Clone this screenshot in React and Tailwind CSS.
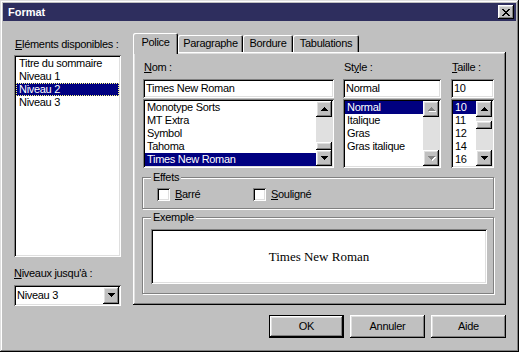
import React from "react";

const raised =
  "bg-[#c0c0c0] shadow-[inset_-1px_-1px_#000,inset_1px_1px_#fff,inset_-2px_-2px_#808080,inset_2px_2px_#dfdfdf]";
const sunken =
  "bg-white shadow-[inset_1px_1px_#808080,inset_-1px_-1px_#fff,inset_2px_2px_#000,inset_-2px_-2px_#dfdfdf]";
const selected = "bg-[#000080] text-white";

const upRows = [
  [3, 1],
  [2, 3],
  [1, 5],
  [0, 7],
];

const Arrow = ({ up, disabled }) => {
  const rows = up ? upRows : [...upRows].reverse();
  return (
    <svg width="8" height="5" viewBox="0 0 8 5" shapeRendering="crispEdges">
      {disabled &&
        rows.map(([x, w], i) => (
          <rect key={"s" + i} x={x + 1} y={i + 1} width={w} height="1" fill="#fff" />
        ))}
      {rows.map(([x, w], i) => (
        <rect key={i} x={x} y={i} width={w} height="1" fill={disabled ? "#808080" : "#000"} />
      ))}
    </svg>
  );
};

const ArrowBtn = ({ up, disabled }) => (
  <div className={`w-[16px] h-[16px] flex items-center justify-center pl-[1px] ${raised}`}>
    <Arrow up={up} disabled={disabled} />
  </div>
);

const ScrollBar = ({ spacer, disabled }) => (
  <div className="w-[16px] flex flex-col bg-[#e0e0e0]">
    <ArrowBtn up disabled={disabled} />
    <div className="flex-1 flex flex-col">
      {spacer && (
        <>
          <div className={spacer} />
          <div className={`h-[8px] ${raised}`} />
        </>
      )}
    </div>
    <ArrowBtn disabled={disabled} />
  </div>
);

const CloseIcon = () => {
  const rows = [
    [[0, 2], [6, 2]],
    [[1, 2], [5, 2]],
    [[2, 4]],
    [[3, 2]],
    [[2, 4]],
    [[1, 2], [5, 2]],
    [[0, 2], [6, 2]],
  ];
  return (
    <svg width="8" height="7" viewBox="0 0 8 7" shapeRendering="crispEdges">
      {rows.map((segs, y) =>
        segs.map(([x, w], i) => <rect key={y + "-" + i} x={x} y={y} width={w} height="1" fill="#000" />)
      )}
    </svg>
  );
};

const Checkbox = ({ children }) => (
  <div className="flex items-center">
    <div className={`w-[13px] h-[13px] ${sunken}`} />
    <span className="ml-[5px]">{children}</span>
  </div>
);

const fonts = ["Monotype Sorts", "MT Extra", "Symbol", "Tahoma", "Times New Roman"];
const styles = ["Normal", "Italique", "Gras", "Gras italique"];
const sizes = ["10", "11", "12", "14", "16"];
const niveaux = ["Titre du sommaire", "Niveau 1", "Niveau 2", "Niveau 3"];

export default function App() {
  return (
    <div className="w-[519px] h-[352px] p-[3px] flex flex-col bg-[#c0c0c0] text-black text-[11px] leading-[13px] tracking-[-0.3px] whitespace-nowrap font-['Liberation_Sans',Arial,sans-serif] shadow-[inset_-1px_-1px_#000,inset_1px_1px_#dfdfdf,inset_-2px_-2px_#808080,inset_2px_2px_#fff]">
      <div className="h-[18px] flex items-center justify-between pl-[5px] pr-[2px] bg-[#2e2e5e]">
        <span className="text-white font-bold tracking-normal">Format</span>
        <div className={`w-[16px] h-[14px] flex items-center justify-center ${raised}`}>
          <CloseIcon />
        </div>
      </div>

      <div className="flex pl-[11px] pt-[12px]">
        {/* left column */}
        <div className="w-[107px] flex flex-col pt-[5px]">
          <div className="pl-[1px]">
            <u>E</u>léments disponibles :
          </div>
          <div className={`mt-[4px] h-[202px] p-[2px] ${sunken}`}>
            {niveaux.map((n) => (
              <div
                key={n}
                className={`h-[13px] pl-[3px] ${
                  n === "Niveau 2" ? `${selected} outline-1 outline-dotted outline-[#ffff80] -outline-offset-1` : ""
                }`}
              >
                {n}
              </div>
            ))}
          </div>
          <div className="mt-[10px]">
            <u>N</u>iveaux jusqu'à :
          </div>
          <div className={`mt-[5px] h-[21px] p-[2px] flex items-center ${sunken}`}>
            <span className="flex-1 pl-[1px]">Niveau 3</span>
            <div className={`w-[16px] h-[17px] flex items-center justify-center pl-[1px] ${raised}`}>
              <Arrow />
            </div>
          </div>
        </div>

        {/* tabs */}
        <div className="ml-[12px] w-[373px] flex flex-col">
          <div className="flex items-end">
            <div className="relative z-10 -mb-[2px] w-[45px] h-[21px] pt-[3px] text-center bg-[#c0c0c0] rounded-t-[2px] shadow-[inset_1px_1px_#fff,inset_-1px_0_#000,inset_-2px_0_#808080]">
              Police
            </div>
            {[
              ["Paragraphe", "w-[65px]"],
              ["Bordure", "w-[50px]"],
              ["Tabulations", "w-[66px]"],
            ].map(([t, w]) => (
              <div
                key={t}
                className={`${w} h-[17px] pt-[2px] text-center rounded-t-[2px] shadow-[inset_1px_1px_#fff,inset_-1px_0_#000,inset_-2px_0_#808080]`}
              >
                {t}
              </div>
            ))}
          </div>

          <div className={`h-[253px] pl-[10px] pt-[9px] pr-[12px] flex flex-col ${raised}`}>
            <div className="flex">
              <div className="w-[191px] flex flex-col">
                <div className="pl-[1px]">
                  <u>N</u>om :
                </div>
                <div className={`mt-[5px] h-[19px] pl-[3px] flex items-center ${sunken}`}>Times New Roman</div>
                <div className={`mt-[1px] h-[69px] p-[2px] flex ${sunken}`}>
                  <div className="flex-1 flex flex-col">
                    {fonts.map((f) => (
                      <div key={f} className={`h-[13px] pl-[2px] ${f === "Times New Roman" ? selected : ""}`}>
                        {f}
                      </div>
                    ))}
                  </div>
                  <ScrollBar spacer="h-[25px]" />
                </div>
              </div>

              <div className="ml-[9px] w-[98px] flex flex-col">
                <div className="pl-[1px]">
                  St<u>y</u>le :
                </div>
                <div className={`mt-[5px] h-[19px] pl-[3px] flex items-center ${sunken}`}>Normal</div>
                <div className={`mt-[1px] h-[69px] p-[2px] flex ${sunken}`}>
                  <div className="flex-1 flex flex-col">
                    {styles.map((s) => (
                      <div key={s} className={`h-[13px] pl-[2px] ${s === "Normal" ? selected : ""}`}>
                        {s}
                      </div>
                    ))}
                  </div>
                  <ScrollBar disabled />
                </div>
              </div>

              <div className="ml-[10px] w-[43px] flex flex-col">
                <div className="pl-[1px]">
                  <u>T</u>aille :
                </div>
                <div className={`mt-[5px] h-[19px] pl-[3px] flex items-center ${sunken}`}>10</div>
                <div className={`mt-[1px] h-[69px] p-[2px] flex ${sunken}`}>
                  <div className="flex-1 flex flex-col">
                    {sizes.map((s) => (
                      <div key={s} className={`h-[13px] pl-[2px] ${s === "10" ? selected : ""}`}>
                        {s}
                      </div>
                    ))}
                  </div>
                  <ScrollBar spacer="h-[4px]" />
                </div>
              </div>
            </div>

            <fieldset className="mt-[3px] -ml-[1px] w-[352px] pl-[8px] pb-[7px] border border-[#808080] shadow-[inset_1px_1px_#fff,1px_1px_#fff]">
              <legend className="px-[2px] bg-[#c0c0c0]">Effets</legend>
              <div className="mt-[4px] ml-[6px] flex">
                <div className="w-[96px]">
                  <Checkbox>
                    <u>B</u>arré
                  </Checkbox>
                </div>
                <Checkbox>
                  <u>S</u>ouligné
                </Checkbox>
              </div>
            </fieldset>

            <fieldset className="mt-[2px] -ml-[1px] w-[352px] pl-[8px] pb-[9px] border border-[#808080] shadow-[inset_1px_1px_#fff,1px_1px_#fff]">
              <legend className="px-[2px] bg-[#c0c0c0]">Exemple</legend>
              <div
                className={`mt-[5px] w-[336px] h-[55px] flex items-center justify-center text-[13px] tracking-normal font-['Liberation_Serif','Times_New_Roman',serif] ${sunken}`}
              >
                Times New Roman
              </div>
            </fieldset>
          </div>

          <div className="mt-[10px] flex justify-end gap-[6px]">
            <div className="w-[75px] h-[23px] border border-black">
              <div className={`w-full h-full flex items-center justify-center ${raised}`}>OK</div>
            </div>
            <div className={`w-[75px] h-[23px] flex items-center justify-center ${raised}`}>Annuler</div>
            <div className={`w-[75px] h-[23px] flex items-center justify-center ${raised}`}>Aide</div>
          </div>
        </div>
      </div>
    </div>
  );
}
